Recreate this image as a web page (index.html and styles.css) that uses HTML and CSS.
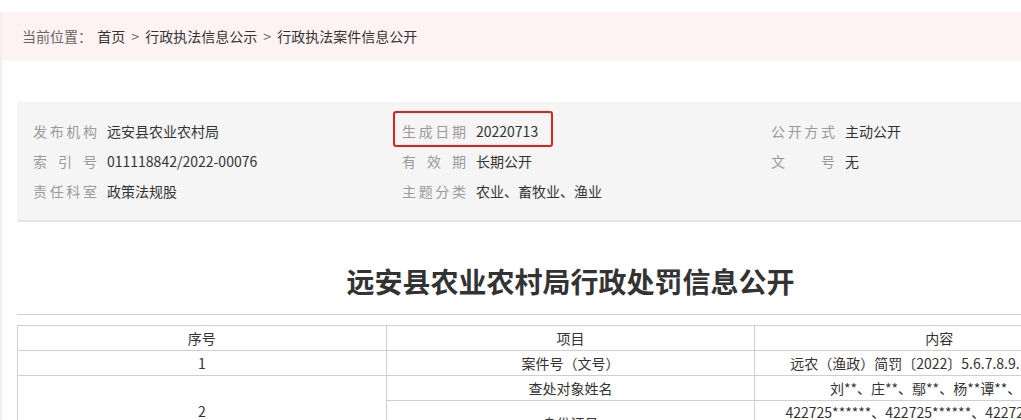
FILE: index.html
```html
<!DOCTYPE html>
<html lang="zh-CN">
<head>
  <meta charset="UTF-8">
  <title>远安县农业农村局行政处罚信息公开</title>
  <link rel="stylesheet" href="styles.css">
</head>
<body>

  <div class="page">
    <div class="crumbs">
      <span class="crumbs-label">当前位置：</span>
      <a href="#">首页</a>
      <span class="sep">&gt;</span>
      <a href="#">行政执法信息公示</a>
      <span class="sep">&gt;</span>
      <a href="#">行政执法案件信息公开</a>
    </div>

    <div class="main">
      <div class="meta-box">
        <div class="meta-item"><span class="meta-label">发布机构</span><span class="meta-value">远安县农业农村局</span></div>
        <div class="meta-item marked"><span class="meta-label">生成日期</span><span class="meta-value">20220713</span><span class="mark"></span></div>
        <div class="meta-item"><span class="meta-label">公开方式</span><span class="meta-value">主动公开</span></div>

        <div class="meta-item"><span class="meta-label">索引号</span><span class="meta-value">011118842/2022-00076</span></div>
        <div class="meta-item"><span class="meta-label">有效期</span><span class="meta-value">长期公开</span></div>
        <div class="meta-item"><span class="meta-label">文号</span><span class="meta-value">无</span></div>

        <div class="meta-item"><span class="meta-label">责任科室</span><span class="meta-value">政策法规股</span></div>
        <div class="meta-item"><span class="meta-label">主题分类</span><span class="meta-value">农业、畜牧业、渔业</span></div>
        <div class="meta-item"></div>
      </div>

      <h1 class="title">远安县农业农村局行政处罚信息公开</h1>

      <div class="content">
        <table class="info-table">
          <tr>
            <td>序号</td>
            <td>项目</td>
            <td>内容</td>
          </tr>
          <tr>
            <td>1</td>
            <td>案件号（文号）</td>
            <td>远农（渔政）简罚〔2022〕5.6.7.8.9.10.11.12号</td>
          </tr>
          <tr>
            <td rowspan="2" class="tall">2</td>
            <td>查处对象姓名</td>
            <td>刘**、庄**、鄢**、杨**谭**、王**</td>
          </tr>
          <tr>
            <td>身份证号</td>
            <td class="multi">422725******、422725******、422725******、4<br>422725******、422725******</td>
          </tr>
        </table>
      </div>
    </div>
  </div>

</body>
</html>
```

FILE: styles.css
```css
body {
  margin: 0;
  padding: 0;
  font-family: "Microsoft YaHei", "Noto Sans CJK SC", sans-serif;
  font-size: 14px;
  color: #333;
  background-color: #fff;
  overflow: hidden;
}

a {
  color: #333;
  text-decoration: none;
}

.page {
  border-left: 2px solid #f0f0f0;
  min-height: 420px;
  width: 1200px;
}

.crumbs {
  margin-top: 12px;
  height: 49px;
  line-height: 49px;
  padding-left: 20px;
  background-color: #fdf3f3;
  color: #555;
}

.crumbs-label {
  color: #666;
  margin-right: 2px;
}

.crumbs .sep {
  margin: 0 3px;
  color: #666;
}

.main {
  width: 1107px;
  margin-left: 15px;
}

.meta-box {
  margin-top: 41px;
  padding: 14px 0 14px 16px;
  background-color: #f5f5f5;
  border-bottom: 2px solid #e4e4e4;
  border-radius: 0 0 0 4px;
  display: grid;
  grid-template-columns: 369px 369px 1fr;
}

.meta-item {
  height: 30px;
  line-height: 30px;
  display: flex;
  position: relative;
}

.meta-label {
  width: 64px;
  color: #9a9a9a;
  text-align: justify;
  text-align-last: justify;
  margin-right: 10px;
}

.meta-value {
  color: #333;
}

.mark {
  position: absolute;
  left: -9px;
  top: -5px;
  width: 156px;
  height: 32px;
  border: 2px solid #e3211c;
  border-radius: 3px;
}

.title {
  margin: 39px 0 0;
  height: 40px;
  line-height: 40px;
  font-size: 28px;
  font-weight: bold;
  text-align: center;
  color: #333;
}

.content {
  margin-top: 13px;
  border-top: 1px solid #d0d0d0;
  padding-top: 10px;
}

.info-table {
  width: 1107px;
  border-collapse: collapse;
  table-layout: fixed;
}

.info-table td {
  border: 1px solid #cfcfcf;
  height: 24px;
  line-height: 24px;
  padding: 0;
  text-align: center;
  white-space: nowrap;
  overflow: hidden;
}

.info-table td.multi {
  line-height: 22px;
}
```
